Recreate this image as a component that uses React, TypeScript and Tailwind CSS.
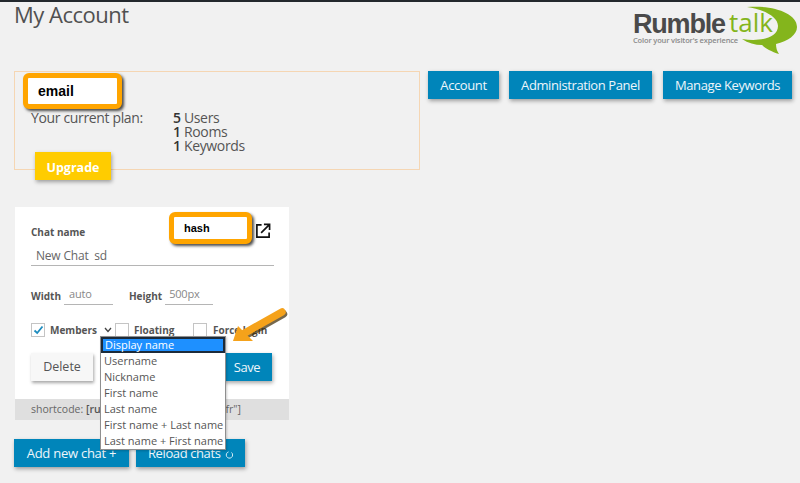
import React from "react";

const font = { fontFamily: '"Open Sans","Noto Sans",sans-serif' };

function BlueBtn({ children, className = "" }: { children: React.ReactNode; className?: string }) {
  return (
    <div className={`bg-[#0085ba] text-[#eef6fa] text-[13px] tracking-[-0.4px] h-[28px] pt-[2px] flex items-center justify-center shrink-0 shadow-[1px_2px_4px_rgba(0,0,0,0.35)] ${className}`}>
      {children}
    </div>
  );
}

function Check({ checked = false }: { checked?: boolean }) {
  return (
    <div className="w-[14px] h-[14px] border border-[#c4c4c4] bg-white flex items-center justify-center shrink-0">
      {checked && (
        <svg width="11" height="10" viewBox="0 0 11 10" fill="none">
          <path d="M1.5 5.5 L4.2 8 L9.5 1.5" stroke="#1e8cbe" strokeWidth="1.8" />
        </svg>
      )}
    </div>
  );
}

function Logo() {
  return (
    <div className="relative w-[167px] h-[52px]">
      <svg className="absolute left-[100px] top-0" width="67" height="52" viewBox="0 0 67 52">
        <g transform="translate(-733 -4)">
          <path d="M747 7 C770 5 797 12 797 27 C797 35 788 41 776 44 C776 48 777 51 779 54 C772 52 765 48 762 45 C755 45 748 43 742 39 C760 42 778 38 778 26 C778 16 762 9 747 7 Z" fill="#84b51c" />
        </g>
      </svg>
      <div className="absolute left-[0px] top-[8px] text-[27px] leading-[24px] font-bold text-[#4a4a4a] font-['Liberation_Sans'] tracking-[-1.2px] whitespace-nowrap">Rumble</div>
      <div className="absolute left-[96px] top-[5px] text-[26px] leading-[26px] font-medium text-[#84b51c] whitespace-nowrap">talk</div>
      <div className="absolute left-[0px] top-[32px] text-[7.5px] leading-[8px] tracking-[-0.15px] text-[#8a8a8a] font-semibold whitespace-nowrap">Color your visitor's experience</div>
    </div>
  );
}

function Highlight({ className = "", text }: { className?: string; text: string }) {
  return (
    <div className={`absolute bg-white border-[5px] border-[#ffa500] rounded-[6px] shadow-[2px_2px_3px_rgba(0,0,0,0.7)] font-['Liberation_Sans'] font-bold text-black flex items-center ${className}`}>
      <span>{text}</span>
    </div>
  );
}

export default function App() {
  const options = ["Username", "Nickname", "First name", "Last name", "First name + Last name", "Last name + First name"];
  return (
    <div style={font} className="relative w-[800px] h-[483px] overflow-hidden bg-[#f1f1f1] text-[#444] border-t-2 border-[#23282d]">
      <div className="flex justify-between items-start pl-[14px] h-[69px]">
        <h1 className="text-[22px] leading-[26px] tracking-[-0.5px] text-[#505050] mt-[-1px]">My Account</h1>
        <div className="mt-[2px]"><Logo /></div>
      </div>

      <div className="flex items-start pl-[14px]">
        <div className="relative w-[406px] h-[99px] border border-[#f5d6b3] pt-[39px] pl-[16px] mr-[8px] shrink-0">
          <div className="flex text-[14px] leading-[14px] tracking-[-0.35px] text-[#555]">
            <div className="w-[142px]">Your current plan:</div>
            <div>
              <div><b className="font-semibold text-[#333]">5</b> Users</div>
              <div><b className="font-semibold text-[#333]">1</b> Rooms</div>
              <div><b className="font-semibold text-[#333]">1</b> Keywords</div>
            </div>
          </div>
          <div className="absolute left-[20px] top-[80px] w-[76px] h-[28px] pt-[5px] bg-[#ffcc00] text-white text-[12.5px] font-bold flex items-center justify-center shadow-[1px_2px_4px_rgba(0,0,0,0.35)]">Upgrade</div>
        </div>
        <BlueBtn className="w-[71px]">Account</BlueBtn>
        <BlueBtn className="w-[143px] ml-[10px]">Administration Panel</BlueBtn>
        <BlueBtn className="w-[129px] ml-[11px]">Manage Keywords</BlueBtn>
      </div>

      <div className="ml-[15px] mt-[37px] w-[274px] h-[213px] bg-white flex flex-col">
        <div className="flex-1 px-[16px] pt-[18px]">
          <div className="text-[10px] leading-[15px] font-bold text-[#555]">Chat name</div>
          <div className="mt-[6px] h-[20px] w-[243px] border-b border-[#b5b5b5] px-[5px] text-[12px] leading-[19px] tracking-[-0.2px] text-[#666]">New Chat&nbsp; sd</div>
          <div className="flex items-end mt-[21px] text-[10px] font-bold text-[#555]">
            <span className="leading-[15px] pb-[1px]">Width</span>
            <div className="ml-[3px] w-[49px] h-[18px] border-b border-[#b5b5b5] px-[5px] text-[11px] leading-[14px] tracking-[-0.2px] font-normal text-[#888]">auto</div>
            <span className="ml-[16px] leading-[15px] pb-[1px]">Height</span>
            <div className="ml-[3px] w-[48px] h-[18px] border-b border-[#b5b5b5] px-[4px] text-[11px] leading-[14px] tracking-[-0.2px] font-normal text-[#888]">500px</div>
          </div>
          <div className="flex items-center mt-[18px] text-[10px] leading-[14px] font-bold text-[#555]">
            <Check checked />
            <span className="ml-[5px] w-[46px]">Members</span>
            <svg className="ml-[8px]" width="8" height="6" viewBox="0 0 8 6" fill="none"><path d="M1 1 L4 4.5 L7 1" stroke="#444" strokeWidth="1.3" /></svg>
            <div className="ml-[3px]"><Check /></div>
            <span className="ml-[5px] w-[59px]">Floating</span>
            <Check />
            <span className="ml-[6px] whitespace-nowrap">Force login</span>
          </div>
          <div className="flex justify-between mt-[16px] mr-[1px]">
            <div className="w-[62px] h-[28px] pt-[1px] bg-[#f7f7f7] text-[12.5px] text-[#555] flex items-center justify-center shadow-[1px_2px_3px_rgba(0,0,0,0.35)]">Delete</div>
            <BlueBtn className="w-[50px]">Save</BlueBtn>
          </div>
        </div>
        <div className="h-[21px] bg-[#dfdfdf] pl-[16px] text-[10.5px] leading-[21px] text-[#666] whitespace-nowrap flex justify-between pr-[48px]">
          <span>shortcode: <b className="font-semibold text-[#555]">[run</b></span>
          <span>fr"]</span>
        </div>
      </div>

      <div className="flex gap-[7px] ml-[14px] mt-[19px]">
        <BlueBtn className="w-[115px] tracking-[-0.25px]">Add new chat +</BlueBtn>
        <BlueBtn className="w-[109px] !justify-start pl-[12px]">
          <span>Reload chats</span>
          <svg className="ml-[5px] mt-[2px]" width="8" height="8" viewBox="0 0 8 8" fill="none">
            <path d="M6.5 1.5 A3.2 3.2 0 1 1 3.5 0.9" stroke="#d8edf6" strokeWidth="1" />
          </svg>
        </BlueBtn>
      </div>

      <Highlight className="left-[23px] top-[71px] w-[99px] h-[36px] text-[14px] pl-[10px] pt-[1px]" text="email" />
      <Highlight className="left-[169px] top-[210px] w-[83px] h-[32px] text-[11px] pl-[10px] pt-[1px]" text="hash" />

      <svg className="absolute left-[255px] top-[221px]" width="16" height="16" viewBox="0 0 17 17" fill="none">
        <path d="M7 2 H2 V15 H15 V10" stroke="#111" strokeWidth="1.8" />
        <path d="M6.5 10.5 L15 2 M9.5 1.5 H15.5 V7.5" stroke="#111" strokeWidth="1.8" />
      </svg>

      <div className="absolute left-[100px] top-[334px] w-[126px] h-[114px] bg-white border border-[#8f8f8f] text-[11px] leading-[16px] text-[#555] shadow-[1px_1px_2px_rgba(0,0,0,0.2)]">
        <div className="h-[16px] bg-[#1e90ff] border-2 border-[#1c2b3a] text-white pl-[2px] leading-[12px]">Display name</div>
        {options.map((o) => (
          <div key={o} className="pl-[3px] whitespace-nowrap">{o}</div>
        ))}
      </div>

      <svg className="absolute left-[228px] top-[304px]" width="62" height="42" viewBox="0 0 62 42" fill="none">
        <path d="M54 7 L15 29" stroke="rgba(60,40,0,0.7)" strokeWidth="7.5" strokeLinecap="round" transform="translate(1.5 1)" />
        <path d="M54 6 L15 28" stroke="#f5a21b" strokeWidth="7.5" strokeLinecap="round" />
        <path d="M5 35 L10 20 L25 35 Z" fill="#f5a21b" />
      </svg>
    </div>
  );
}
